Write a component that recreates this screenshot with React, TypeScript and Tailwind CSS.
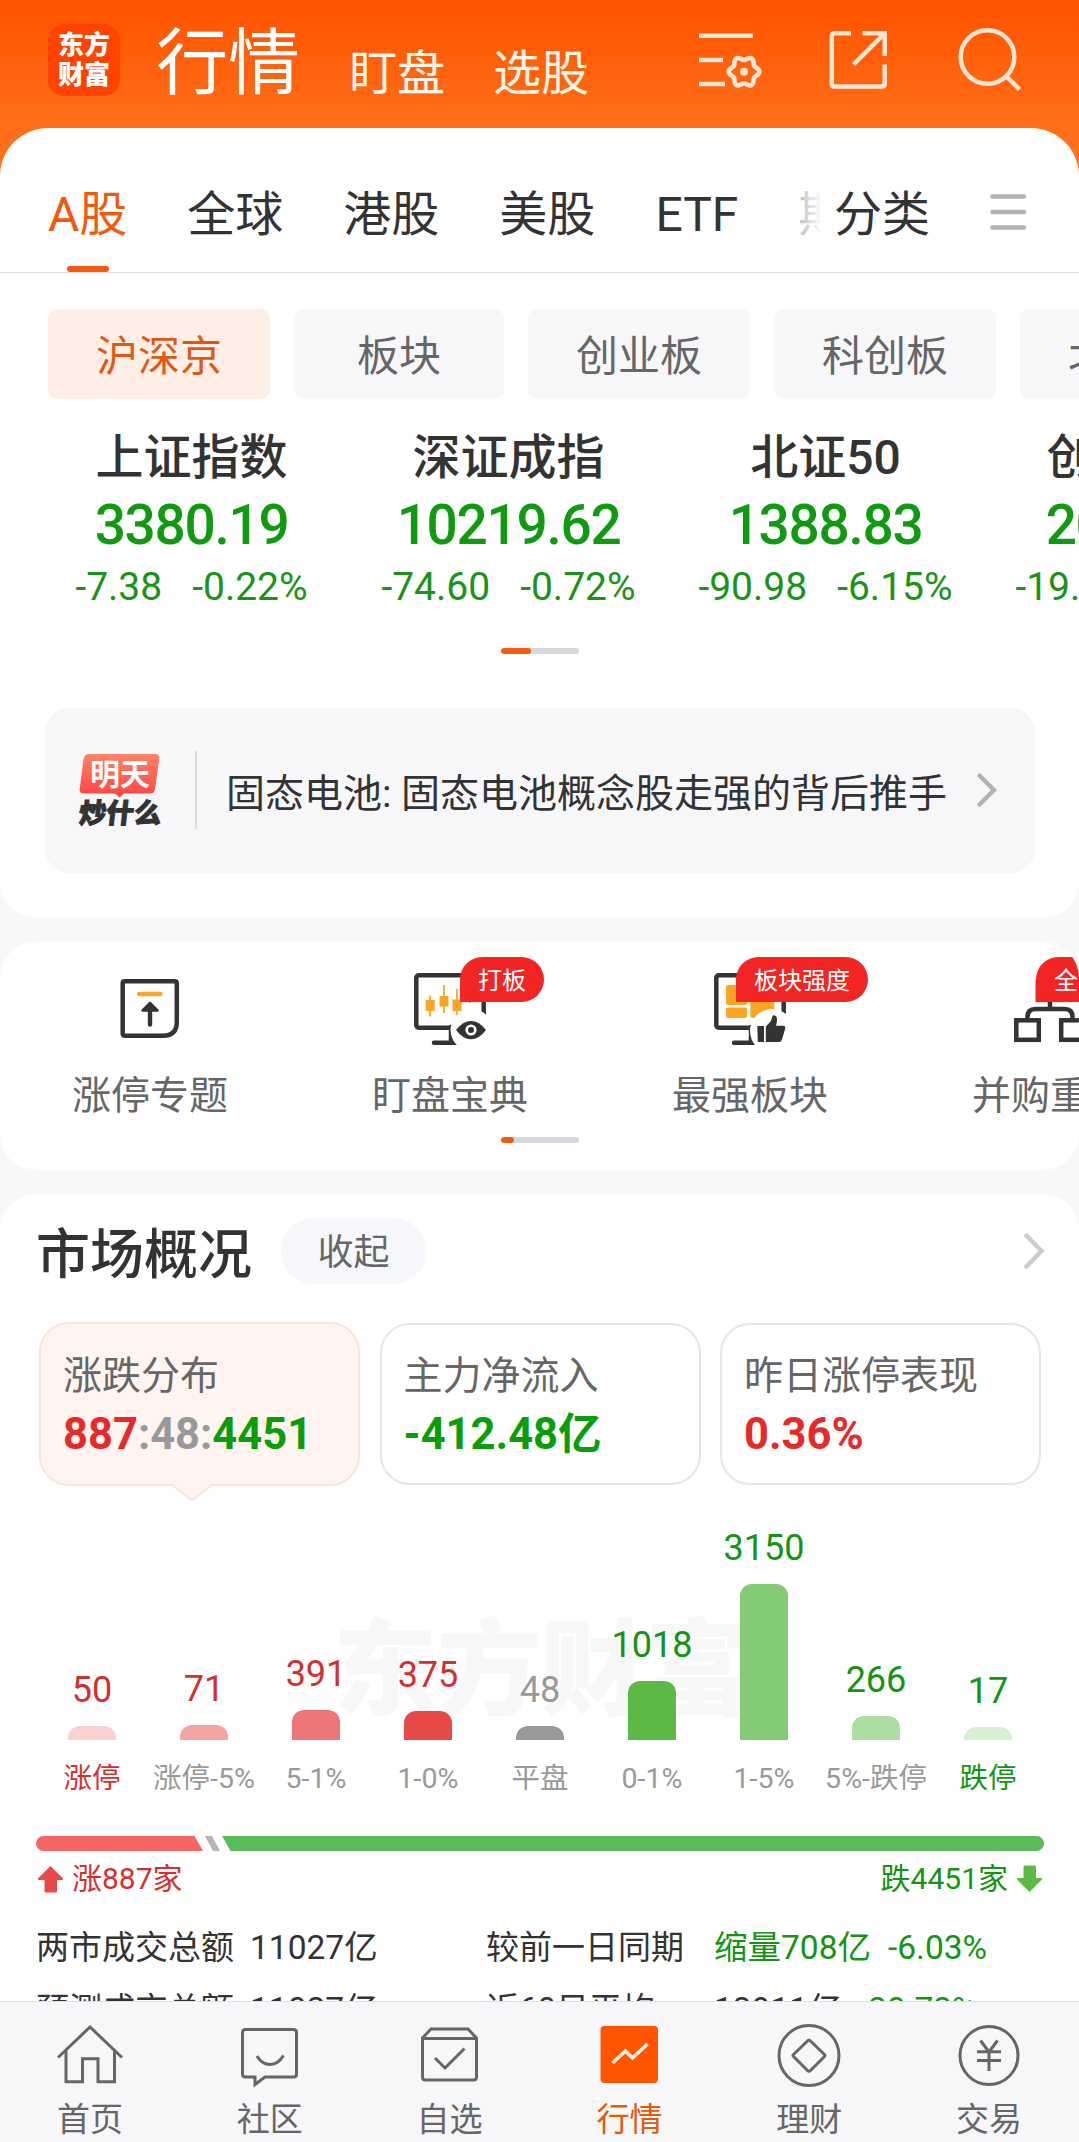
import React from 'react';
import clsx from 'clsx';

const markets = ['A股', '全球', '港股', '美股', 'ETF', '期货'];
const boards = ['沪深京', '板块', '创业板', '科创板', '北交所'];

const indexes = [
  { name: '上证指数', value: '3380.19', change: '-7.38', percent: '-0.22%' },
  { name: '深证成指', value: '10219.62', change: '-74.60', percent: '-0.72%' },
  { name: '北证50', value: '1388.83', change: '-90.98', percent: '-6.15%' },
  { name: '创业板指', value: '2021.50', change: '-19.86', percent: '-0.97%' },
];

const distribution = [
  { label: '涨停', count: 50, height: 14, bar: 'bg-[#f9d1d1]', text: 'text-[#d32f2f]', labelText: 'text-[#d32f2f]' },
  { label: '涨停-5%', count: 71, height: 15, bar: 'bg-[#f3a4a4]', text: 'text-[#d32f2f]', labelText: 'text-[#999999]' },
  { label: '5-1%', count: 391, height: 30, bar: 'bg-[#ed7777]', text: 'text-[#d32f2f]', labelText: 'text-[#999999]' },
  { label: '1-0%', count: 375, height: 29, bar: 'bg-[#e74848]', text: 'text-[#d32f2f]', labelText: 'text-[#999999]' },
  { label: '平盘', count: 48, height: 14, bar: 'bg-[#999999]', text: 'text-[#999999]', labelText: 'text-[#999999]' },
  { label: '0-1%', count: 1018, height: 59, bar: 'bg-[#5cb944]', text: 'text-[#139413]', labelText: 'text-[#999999]' },
  { label: '1-5%', count: 3150, height: 156, bar: 'bg-[#84cb76]', text: 'text-[#139413]', labelText: 'text-[#999999]' },
  { label: '5%-跌停', count: 266, height: 24, bar: 'bg-[#aedda3]', text: 'text-[#139413]', labelText: 'text-[#999999]' },
  { label: '跌停', count: 17, height: 13, bar: 'bg-[#d7eed2]', text: 'text-[#139413]', labelText: 'text-[#139413]' },
];

// Six-lobed outline of the settings gear
const gearPath =
  Array.from({ length: 72 }, (_, i) => {
    const a = (i / 72) * Math.PI * 2;
    const r = 13.5 + 1.8 * Math.cos(6 * a);
    return `${i ? 'L' : 'M'}${(46 + r * Math.cos(a)).toFixed(2)} ${(43.7 + r * Math.sin(a)).toFixed(2)}`;
  }).join('') + 'Z';

function Header() {
  return (
    <header className="flex h-32 shrink-0 items-center pl-12 pr-14 text-white">
      <div className="-mt-2 flex h-[72px] w-[72px] flex-col items-center justify-center rounded-2xl bg-[#ff4400] pb-1 font-['Noto_Sans_CJK_SC',sans-serif] text-[26px] font-black leading-[30px]">
        <span>东方</span>
        <span>财富</span>
      </div>
      <h1 className="ml-9 text-[72px] leading-[80px]">行情</h1>
      <span className="ml-[49px] mt-5 text-[48px] leading-[60px] text-[#fff6ea]">盯盘</span>
      <span className="ml-12 mt-5 text-[48px] leading-[60px] text-[#fff6ea]">选股</span>
      <svg className="ml-auto" width="66" height="72" viewBox="0 0 66 72" fill="none" stroke="#ffe5d3" strokeWidth="4.6">
        <path d="M1 7.7H55M1 32H25M1 56H27" />
        <path d={gearPath} strokeLinejoin="round" />
        <circle cx="46" cy="43.7" r="4" fill="#ffe5d3" stroke="none" />
      </svg>
      <svg className="ml-16" width="60" height="72" viewBox="0 0 60 72" fill="none" stroke="#ffe5d3" strokeWidth="4.5">
        <path d="M23 5.3H6.5Q3.8 5.3 3.8 8V55.8Q3.8 58.5 6.5 58.5H54Q56.7 58.5 56.7 55.8V36.5" />
        <path d="M34.5 5.3H56.7V28M25.5 36.5L56 6" />
      </svg>
      <svg className="ml-[69px]" width="66" height="72" viewBox="0 0 66 72" fill="none" stroke="#ffe5d3" strokeWidth="4.5">
        <circle cx="30.5" cy="29" r="26.8" />
        <path d="M49 48L62.5 61.5" />
      </svg>
    </header>
  );
}

function MarketTabs() {
  return (
    <div className="flex h-[145px] border-b border-[#e0e0e0] text-[48px] leading-[113px] text-[#333333]">
      <div className="relative flex w-[822px] gap-[60px] overflow-hidden whitespace-nowrap pl-12 pt-[30px]">
        {markets.map((m, i) => (
          <span key={m} className={clsx('relative h-[114px] shrink-0', i === 0 && 'text-[#f05a10]')}>
            {m}
            {i === 0 && (
              <span className="absolute bottom-0 left-1/2 h-1.5 w-[42px] -translate-x-1/2 rounded-full bg-[#f75a0c]" />
            )}
          </span>
        ))}
        <div className="absolute right-0 top-0 h-full w-11 bg-linear-to-r from-white/40 to-white" />
      </div>
      <span className="pl-3 pt-[30px]">分类</span>
      <svg className="ml-[60px] mt-[66px]" width="37" height="36" viewBox="0 0 37 36" stroke="#b2b2b2" strokeWidth="4.4" strokeLinecap="round">
        <path d="M2.5 2.5H34M2.5 18H34M2.5 33.5H34" />
      </svg>
    </div>
  );
}

function Pager({ active }: { active: string }) {
  return (
    <div className="ml-[501px] h-1.5 w-[78px] overflow-hidden rounded-full bg-[#d4d7db]">
      <div className={clsx('h-full rounded-full bg-[#f55a10]', active)} />
    </div>
  );
}

function IndexPanel() {
  return (
    <section className="shrink-0 overflow-hidden rounded-b-[36px] rounded-t-[48px] bg-white pb-[45px]">
      <MarketTabs />
      <div className="mt-9 flex gap-6 pl-12">
        {boards.map((b, i) => (
          <div
            key={b}
            className={clsx(
              'flex h-[90px] min-w-[210px] shrink-0 items-center justify-center rounded-[9px] px-12 pt-1.5 text-[42px] leading-[60px]',
              i === 0 ? 'bg-[#ffeee6] text-[#dd5a14]' : 'bg-[#f7f7fa] text-[#666666]',
            )}
          >
            {b}
          </div>
        ))}
      </div>
      <div className="flex pl-[33px] pt-[29px]">
        {indexes.map((x) => (
          <div key={x.name} className="flex w-[317px] shrink-0 flex-col items-center whitespace-nowrap text-[#0f9a0f]">
            <div className="text-[48px] font-medium leading-[60px] text-[#333333]">{x.name}</div>
            <div className="mt-1 text-[55px] font-medium leading-[66px] tracking-[-1.3px]">{x.value}</div>
            <div className="mt-[5px] flex gap-[30px] text-[39px] leading-[48px] text-[#1a931a]">
              <span>{x.change}</span>
              <span>{x.percent}</span>
            </div>
          </div>
        ))}
      </div>
      <div className="mt-[37px]">
        <Pager active="w-[30px]" />
      </div>
      <div className="ml-[45px] mr-11 mt-[54px] flex h-[165px] items-center rounded-3xl bg-[#f7f7fa] pl-[33px] pr-[38px]">
        <div className="relative flex h-[76px] w-[84px] flex-col items-center">
          <svg className="absolute left-0 top-0" width="84" height="46" viewBox="0 0 84 46">
            <defs>
              <linearGradient id="hot" x1="0" y1="0" x2="0" y2="1">
                <stop offset="0" stopColor="#ff8464" />
                <stop offset="1" stopColor="#fb4444" />
              </linearGradient>
            </defs>
            <path
              d="M11 1H77Q82 1 81.3 6L77 36Q76.3 40.5 72 40.5H46L41.5 44.5L37 40.5H6Q1 40.5 1.7 36L5.5 6Q6.3 1 11 1Z"
              fill="url(#hot)"
            />
          </svg>
          <span className="relative text-[30px] font-bold leading-[43px] text-white">明天</span>
          <span className="mt-1 -skew-x-6 text-[27.5px] font-black leading-[28px] text-[#333333] [-webkit-text-stroke:1px_#333333]">
            炒什么
          </span>
        </div>
        <div className="mb-0.5 ml-[33px] h-[78px] w-0.5 bg-[#dcdcde]" />
        <p className="ml-[29px] whitespace-nowrap pt-1.5 text-[39px] leading-[54px] text-[#333333]">
          固态电池: 固态电池概念股走强的背后推手
        </p>
        <svg className="mb-0.5 ml-auto" width="20" height="36" viewBox="0 0 20 36" fill="none" stroke="#b2b2b2" strokeWidth="4.4" strokeLinecap="round">
          <path d="M2.5 3.5L17 18L2.5 32.5" />
        </svg>
      </div>
    </section>
  );
}

function LimitUpIcon() {
  return (
    <svg width="72" height="72" viewBox="0 0 72 72" fill="none">
      <path
        d="M11 8.3H60.5Q62.8 8.3 62.8 10.5V49Q62.8 62.7 49 62.7H11Q8.7 62.7 8.7 60.5V10.5Q8.700 8.3 11 8.3Z"
        stroke="#333333"
        strokeWidth="4.5"
      />
      <path d="M25 21H46.5" stroke="#fca524" strokeWidth="4.4" strokeLinecap="round" />
      <path d="M36 36V51.5" stroke="#333333" strokeWidth="4.4" strokeLinecap="round" />
      <path d="M36 30L43.5 37.5H28.5Z" fill="#333333" stroke="#333333" strokeWidth="2.5" strokeLinejoin="round" />
    </svg>
  );
}

function Monitor() {
  return (
    <g stroke="#333333" strokeWidth="4.5" fill="none">
      <path d="M36 54.7H5Q2.3 54.7 2.3 52V5Q2.3 2.3 5 2.3H67Q69.7 2.3 69.7 5V44" />
      <path d="M20 69.7H46M37 54V71" strokeLinecap="round" />
    </g>
  );
}

function WatchIcon() {
  return (
    <svg width="72" height="72" viewBox="0 0 72 72">
      <Monitor />
      <path d="M16 22.5V43.5M30 12V40M43 16V45M56 10V30" stroke="#fca524" strokeWidth="1.8" />
      <path d="M11.7 27h9v11h-9zM25.5 23h9v10.5h-9zM38.5 26.5h9v11.5h-9z" fill="#fca524" />
      <circle cx="57.5" cy="57" r="21" fill="#ffffff" />
      <path d="M42 57Q49 48 57 48T72 57Q65 66.3 57 66.3T42 57Z" fill="#333333" />
      <circle cx="57" cy="57" r="4.3" fill="#333333" stroke="#ffffff" strokeWidth="2.6" />
    </svg>
  );
}

function StrongBoardIcon() {
  return (
    <svg width="72" height="72" viewBox="0 0 72 72">
      <Monitor />
      <g fill="#fca524">
        <rect x="12" y="12" width="21" height="20" rx="2" />
        <rect x="12" y="34.5" width="21" height="10.5" rx="2" />
        <rect x="36.3" y="12" width="24" height="33" rx="2" />
      </g>
      <circle cx="58" cy="58" r="22" fill="#ffffff" />
      <path d="M43.3 53H50V69H44.5Q43.8 69 43.8 68Z" fill="#333333" />
      <path d="M51.8 69V53.5L57 48L58.3 43.5Q59.5 41.3 62 43.3Q64 46 62 52.8H69.5Q71.7 53 71.2 55.5L68 66.5Q67.3 69 65 69Z" fill="#333333" />
    </svg>
  );
}

function MergerIcon() {
  return (
    <svg width="72" height="72" viewBox="0 0 72 72" fill="none" stroke="#333333" strokeWidth="4.5">
      <rect x="23.300" y="9" width="26" height="18" stroke="#fca524" />
      <path d="M13.5 46V44Q13.5 36 21.5 36H50.5Q58.5 36 58.5 44V46M36 27V36" />
      <rect x="2.3" y="47.3" width="22.5" height="19.5" />
      <rect x="47.2" y="47.3" width="22.5" height="19.5" />
    </svg>
  );
}

const tools = [
  { label: '涨停专题', icon: <LimitUpIcon /> },
  { label: '盯盘宝典', icon: <WatchIcon />, badge: '打板', badgeLeft: 'left-[160px]' },
  { label: '最强板块', icon: <StrongBoardIcon />, badge: '板块强度', badgeLeft: 'left-[136px]' },
  { label: '并购重组', icon: <MergerIcon />, badge: '全新上线', badgeLeft: 'left-[136px]' },
];

function ToolPanel() {
  return (
    <section className="mt-6 h-[228px] shrink-0 overflow-hidden rounded-[36px] bg-white">
      <div className="flex">
        {tools.map((t) => (
          <div key={t.label} className="relative flex w-[300px] shrink-0 flex-col items-center pt-[31px]">
            {t.icon}
            {t.badge && (
              <span
                className={clsx(
                  'absolute top-[15px] h-[45px] whitespace-nowrap rounded-3xl rounded-bl-none bg-[#f32424] px-[18px] text-[24px] leading-[49px] text-white',
                  t.badgeLeft,
                )}
              >
                {t.badge}
              </span>
            )}
            <span className="mt-[23px] text-[39px] leading-[57px] text-[#666666]">{t.label}</span>
          </div>
        ))}
      </div>
      <div className="mt-3">
        <Pager active="w-[13px]" />
      </div>
    </section>
  );
}

function SummaryCards() {
  return (
    <div className="mt-[38px] flex items-center gap-[19.5px] pl-[39px] text-[43.5px] font-bold">
      <div className="relative h-[164px] w-[321px] rounded-[30px] border-2 border-[#fae4d9] bg-[#fff4ef] pl-[22px] pt-[25px]">
        <div className="text-[39px] font-normal leading-[54px] text-[#666666]">涨跌分布</div>
        <div className="mt-0.5 leading-[60px]">
          <span className="text-[#e62a2a]">887</span>
          <span className="text-[#999999]">:48:</span>
          <span className="text-[#0a9d0a]">4451</span>
        </div>
        <svg className="absolute -bottom-[17px] left-[130px]" width="42" height="18" viewBox="0 0 42 18">
          <path d="M1 0V1.5L18 15.5Q21 17.8 24 15.5L41 1.5V0Z" fill="#fff4ef" />
          <path d="M1 1.5L18 15.5Q21 17.8 24 15.5L41 1.5" fill="none" stroke="#fae4d9" strokeWidth="1.8" />
        </svg>
      </div>
      <div className="h-[162px] w-[321px] rounded-[30px] border-2 border-[#e6e6e6] pl-[22px] pt-6">
        <div className="text-[39px] font-normal leading-[54px] text-[#666666]">主力净流入</div>
        <div className="mt-0.5 leading-[60px] text-[#0a9d0a]">-412.48亿</div>
      </div>
      <div className="h-[162px] w-[321px] rounded-[30px] border-2 border-[#e6e6e6] pl-[22px] pt-6">
        <div className="text-[39px] font-normal leading-[54px] text-[#666666]">昨日涨停表现</div>
        <div className="mt-0.5 leading-[60px] text-[#e62a2a]">0.36%</div>
      </div>
    </div>
  );
}

function DistributionChart() {
  return (
    <div className="relative">
      <div className="absolute left-[333px] top-[116px] whitespace-nowrap text-[104px] font-black leading-[140px] text-[#f7f7f7]">
        东方财富
      </div>
      <div className="relative flex h-[254px] items-end pl-9">
        {distribution.map((d) => (
          <div key={d.label} className="flex w-28 shrink-0 flex-col items-center">
            <span className={clsx('mb-3 text-[36px] leading-[48px]', d.text)}>{d.count}</span>
            <div className={clsx('w-12 rounded-t-xl', d.bar)} style={{ height: d.height }} />
          </div>
        ))}
      </div>
      <div className="mt-[18px] flex pl-9 text-[28.5px] leading-[42px]">
        {distribution.map((d) => (
          <span key={d.label} className={clsx('w-28 shrink-0 whitespace-nowrap text-center', d.labelText)}>
            {d.label}
          </span>
        ))}
      </div>
    </div>
  );
}

function MarketOverview() {
  return (
    <section className="mt-6 shrink-0 rounded-t-[36px] bg-white pt-6">
      <div className="flex h-[66px] items-center pl-9 pr-[34px]">
        <h2 className="pt-2.5 text-[54px] font-medium leading-[66px] text-[#333333]">市场概况</h2>
        <button className="ml-[29px] h-[66px] w-[145px] rounded-full bg-[#f6f7fa] pt-1 text-[36px] leading-[63px] text-[#666666]">
          收起
        </button>
        <svg className="ml-auto" width="22" height="38" viewBox="0 0 22 38" fill="none" stroke="#cccccc" strokeWidth="4.5">
          <path d="M2 2L18.5 19L2 36" />
        </svg>
      </div>
      <SummaryCards />
      <DistributionChart />
      <svg className="ml-9 mt-9 block" width="1008" height="15" viewBox="0 0 1008 15">
        <path d="M7.5 0H158.5L167 15H7.5A7.5 7.5 0 0 1 7.5 0Z" fill="#f66464" />
        <path d="M169 0H176L184 15H177Z" fill="#b5b5b5" />
        <path d="M186 0H1000.5A7.5 7.5 0 0 1 1000.5 15H194.5Z" fill="#5bba5a" />
      </svg>
      <div className="mt-[7px] flex h-[42px] items-center justify-between pl-[37px] pr-9 text-[30px] leading-[42px]">
        <div className="flex items-center gap-2 text-[#d32f2f]">
          <svg width="27" height="28" viewBox="0 0 27 28" fill="#e74848">
            <path d="M13.5 1L26 13.5Q26.5 15 25 15H20V26Q20 27.5 18.5 27.5H9Q7.5 27.5 7.5 26V15H2Q0.500 15 1 13.5Z" />
          </svg>
          <span>涨887家</span>
        </div>
        <div className="flex items-center gap-2 text-[#139413]">
          <span>跌4451家</span>
          <svg width="27" height="28" viewBox="0 0 27 28" fill="#5cb944">
            <path d="M13.5 27L26 14.5Q26.5 13 25 13H20V2Q20 0.5 18.5 0.5H9Q7.5 0.5 7.5 2V13H2Q0.500 13 1 14.5Z" />
          </svg>
        </div>
      </div>
      <div className="mt-[17px] grid grid-cols-[214px_236px_228px_1fr] whitespace-nowrap pl-9 text-[33px] leading-[62px] text-[#333333]">
        <span>两市成交总额</span>
        <span className="text-[33.5px]">11027亿</span>
        <span>较前一日同期</span>
        <span className="flex gap-[17px] text-[33.5px] text-[#139413]">
          <span>缩量708亿</span>
          <span>-6.03%</span>
        </span>
        <span>预测成交总额</span>
        <span className="text-[33.5px]">11027亿</span>
        <span>近60日平均</span>
        <span className="flex gap-[17px] text-[33.5px]">
          <span>13911亿</span>
          <span className="text-[#139413]">-20.73%</span>
        </span>
      </div>
    </section>
  );
}

const navItems = [
  {
    label: '首页',
    icon: (
      <>
        <path d="M1 33.5L33 3L65 33.5" />
        <path d="M9 27V57.7H25.5V34.8H41V57.7H57.5V27" />
      </>
    ),
  },
  {
    label: '社区',
    icon: (
      <>
        <path d="M8.5 5.5H56.5Q59.5 5.5 59.5 8.5V50Q59.5 53 56.5 53H28L18 60.5V53H8.5Q5.5 53 5.5 50V8.5Q5.5 5.5 8.5 5.5Z" />
        <path d="M20 32Q25 40.5 33 40.5T46.5 31.5" />
      </>
    ),
  },
  {
    label: '自选',
    icon: (
      <>
        <path d="M5.5 14L14 5H51L59.5 14V53Q59.5 56 56.5 56H8.5Q5.5 56 5.5 53ZM5.5 14.5H59.5" />
        <path d="M18 34L28 44L47.5 24.5" />
      </>
    ),
  },
  {
    label: '行情',
    active: true,
    icon: (
      <>
        <rect x="4.5" y="2" width="57.5" height="57" rx="4" fill="#ff5500" stroke="none" />
        <path d="M16.5 39L29.5 27L36.5 34L51.5 20" stroke="#ffeedd" strokeWidth="3.6" />
      </>
    ),
  },
  {
    label: '理财',
    icon: (
      <>
        <circle cx="33" cy="31.5" r="30" />
        <path d="M31.5 17Q33 15.5 34.5 17L48.5 30.5Q49.5 31.5 48.5 32.5L34.5 46.5Q33 48 31.5 46.5L17.5 32.5Q16.5 31.5 17.5 30.5Z" />
      </>
    ),
  },
  {
    label: '交易',
    icon: (
      <>
        <circle cx="33" cy="31.5" r="29" />
        <path d="M24.5 16.5L33 28L41.5 16.5M33 28V47M21 27.7H45M21 36.5H45" />
      </>
    ),
  },
];

function BottomNav() {
  return (
    <nav className="grid h-[141px] shrink-0 grid-cols-6 border-t border-[#e0e0e3] bg-[#f7f7fa]">
      {navItems.map((n) => (
        <div
          key={n.label}
          className={clsx('flex flex-col items-center pt-[22px]', n.active ? 'text-[#e2590f]' : 'text-[#666666]')}
        >
          <svg width="66" height="64" viewBox="0 0 66 64" fill="none" stroke="#666666" strokeWidth="3">
            {n.icon}
          </svg>
          <span className="mt-[11px] text-[33px] leading-[42px]">{n.label}</span>
        </div>
      ))}
    </nav>
  );
}

export default function App() {
  return (
    <div className="flex h-[2142px] w-[1079px] flex-col overflow-hidden bg-[linear-gradient(#ff5500_10px,#ff6f1a_128px,#ff7320_180px,#f7f8fa_180px)] font-['Roboto','Noto_Sans_CJK_SC',sans-serif]">
      <div className="flex min-h-0 flex-1 flex-col overflow-hidden">
        <Header />
        <IndexPanel />
        <ToolPanel />
        <MarketOverview />
      </div>
      <BottomNav />
    </div>
  );
}
